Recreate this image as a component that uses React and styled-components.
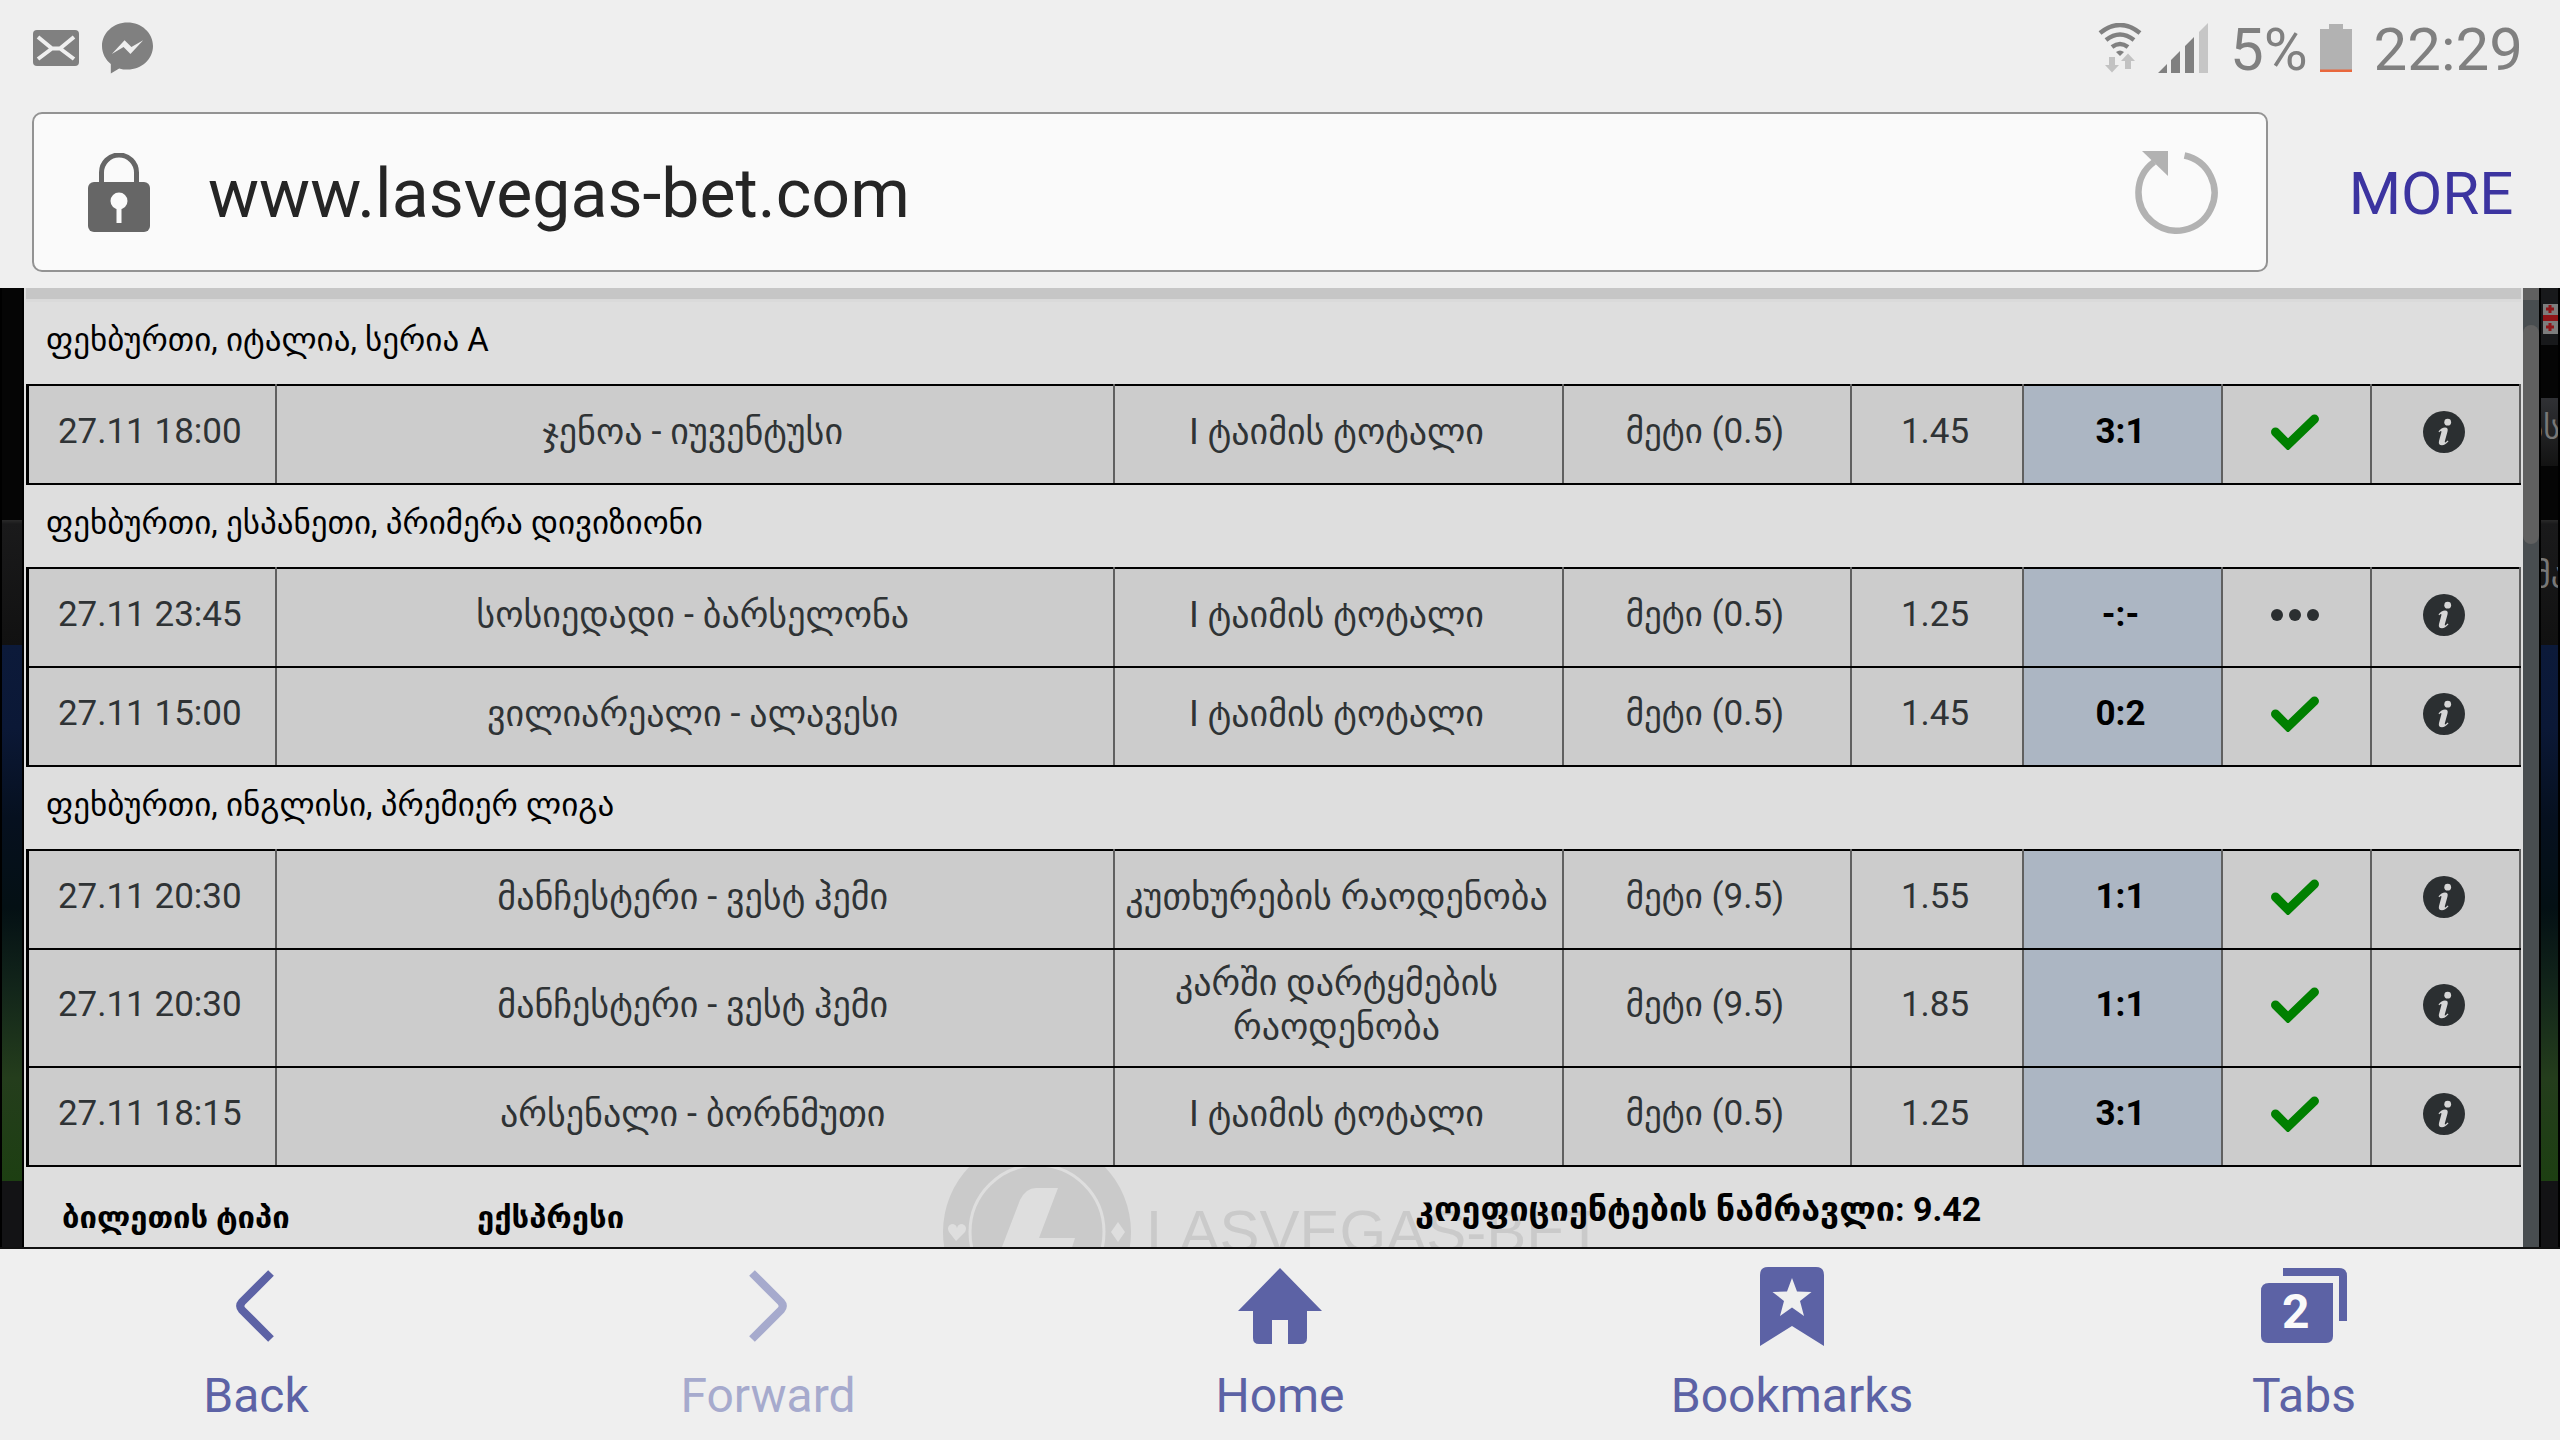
import React from "react";
import styled, { createGlobalStyle, css } from "styled-components";

const sections = [
  {
    title: "ფეხბურთი, იტალია, სერია A",
    rows: [
      { time: "27.11 18:00", teams: "ჯენოა - იუვენტუსი", market: "I ტაიმის ტოტალი", pick: "მეტი (0.5)", odds: "1.45", score: "3:1", won: true },
    ],
  },
  {
    title: "ფეხბურთი, ესპანეთი, პრიმერა დივიზიონი",
    rows: [
      { time: "27.11 23:45", teams: "სოსიედადი - ბარსელონა", market: "I ტაიმის ტოტალი", pick: "მეტი (0.5)", odds: "1.25", score: "-:-", won: false },
      { time: "27.11 15:00", teams: "ვილიარეალი - ალავესი", market: "I ტაიმის ტოტალი", pick: "მეტი (0.5)", odds: "1.45", score: "0:2", won: true },
    ],
  },
  {
    title: "ფეხბურთი, ინგლისი, პრემიერ ლიგა",
    rows: [
      { time: "27.11 20:30", teams: "მანჩესტერი - ვესტ ჰემი", market: "კუთხურების რაოდენობა", pick: "მეტი (9.5)", odds: "1.55", score: "1:1", won: true },
      { time: "27.11 20:30", teams: "მანჩესტერი - ვესტ ჰემი", market: "კარში დარტყმების რაოდენობა", pick: "მეტი (9.5)", odds: "1.85", score: "1:1", won: true },
      { time: "27.11 18:15", teams: "არსენალი - ბორნმუთი", market: "I ტაიმის ტოტალი", pick: "მეტი (0.5)", odds: "1.25", score: "3:1", won: true },
    ],
  },
];

const MailIcon = () => (
  <svg width="46" height="36" viewBox="0 0 46 36">
    <rect width="46" height="36" rx="4" fill="#808080" />
    <path d="M5 7l14 11.500h8L41 7M5 29l14-10.500M41 29L27 18.500" fill="none" stroke="#efefef" strokeWidth="4" />
  </svg>
);

const MessengerIcon = () => (
  <svg width="51" height="52" viewBox="0 0 52 52">
    <path d="M26 0C11.600 0 0 10.700 0 24c0 7.500 3.600 14 9 18.300V52l8.500-5.200c2.700.8 5.500 1.200 8.500 1.200 14.400 0 26-10.700 26-24S40.400 0 26 0z" fill="#808080" />
    <path d="M10 32l13-14 7 7 12-7-13 14-7-7z" fill="#efefef" />
  </svg>
);

const WifiIcon = () => (
  <svg width="44" height="50" viewBox="0 0 44 50">
    <g fill="none" stroke="#808080" strokeWidth="4.500">
      <path d="M2 10Q22-6 42 10" />
      <path d="M8 17Q22 6 36 17" />
      <path d="M14 24Q22 18 30 24" />
    </g>
    <path d="M18 29q4-3 8 0l-4 4z" fill="#808080" />
    <path d="M11 34h6v8h4l-7 7.500-7-7.500h4zM27 46h6v-8h4l-7-7.500-7 7.500h4z" fill="#c2c2c2" />
  </svg>
);

const SignalIcon = () => (
  <svg width="50" height="50" viewBox="0 0 50 50">
    <path d="M0 50l9-9v9zM13 37l9-9v22h-9zM27 23l9-9v36h-9z" fill="#808080" />
    <path d="M41 9l9-9v50h-9z" fill="#c6c6c6" />
  </svg>
);

const BatteryIcon = () => (
  <svg width="32" height="48" viewBox="0 0 32 48">
    <path d="M9 0h14v5h9v43H0V5h9z" fill="#b2b2b2" />
    <path d="M0 45.500h32V48H0z" fill="#e9673c" />
  </svg>
);

const LockIcon = () => (
  <svg width="62" height="79" viewBox="0 0 62 79">
    <path d="M13.500 32V19.500a17.500 17.500 0 0 1 35 0V32" fill="none" stroke="#666" strokeWidth="5" />
    <rect y="29" width="62" height="50" rx="6" fill="#666" />
    <circle cx="31" cy="48" r="8.500" fill="#fafafa" />
    <path d="M28.500 50h5v20h-5z" fill="#fafafa" />
  </svg>
);

const ReloadIcon = () => (
  <svg width="84" height="84" viewBox="0 0 84 84">
    <path d="M50.500 5.500A38 38 0 1 1 20 12" fill="none" stroke="#b2b2b2" strokeWidth="6.500" />
    <path d="M8 1h26v25z" fill="#b2b2b2" />
  </svg>
);

const CheckIcon = () => (
  <svg width="48" height="36" viewBox="0 0 48 36">
    <path d="M4.500 18L17 30.500 43.500 5" fill="none" stroke="#008000" strokeWidth="9" strokeLinecap="round" />
  </svg>
);

const DotsIcon = () => (
  <svg width="48" height="12" viewBox="0 0 48 12">
    <g fill="#2b2f31">
      <circle cx="6" cy="6" r="6" />
      <circle cx="24" cy="6" r="6" />
      <circle cx="42" cy="6" r="6" />
    </g>
  </svg>
);

const InfoIcon = () => (
  <svg width="42" height="42" viewBox="0 0 42 42">
    <circle cx="21" cy="21" r="21" fill="#2b2f31" />
    <circle cx="24.700" cy="11.200" r="3.400" fill="#d6d6d6" />
    <path d="M15.500 20.500q3-3.800 6.500-4 3.500 0 2.500 4l-2.600 9.500q-.5 2 .8 1.200l2-1.800.8.900q-3.400 4-6.500 4-4 0-3-4.300l2.300-8.500q.5-2-.6-1.500l-1.500 1.300z" fill="#d6d6d6" />
  </svg>
);

const BackIcon = () => (
  <svg width="42" height="72" viewBox="0 0 42 72">
    <path d="M36 3L7 32q-3.500 4 0 8l29 29" fill="none" stroke="currentColor" strokeWidth="8" />
  </svg>
);

const ForwardIcon = () => (
  <svg width="40" height="72" viewBox="0 0 40 72">
    <path d="M4 3l29 29q3.500 4 0 8L4 69" fill="none" stroke="currentColor" strokeWidth="8" />
  </svg>
);

const HomeIcon = () => (
  <svg width="84" height="76" viewBox="0 0 84 76">
    <path d="M42 0l42 43H69v27q0 6-6 6H50V52H34v24H21q-6 0-6-6V43H0z" fill="currentColor" />
  </svg>
);

const BookmarkIcon = () => (
  <svg width="64" height="79" viewBox="0 0 64 79">
    <path d="M0 8q0-8 8-8h48q8 0 8 8v71L32 59 0 79z" fill="currentColor" />
    <path d="M32 11l5 13.500 14.500.5L40 34l4 15-12-8.500L20 49l4-15-11.500-9L27 24.500z" fill="#efefef" />
  </svg>
);

const TabsIcon = () => (
  <svg width="86" height="76" viewBox="0 0 86 76">
    <path d="M22 0h56q8 0 8 8v45h-8V8H22z" fill="currentColor" />
    <path d="M8 15h64v53q0 7-7 7H7q-7 0-7-7V23q0-8 8-8z" fill="currentColor" />
  </svg>
);

const FlagIcon = () => (
  <svg width="16" height="30" viewBox="0 0 16 30">
    <path d="M0 0h16v30H0z" fill="#7d7d7d" />
    <path d="M0 11h16v6H0zM5.500 1h3v8h-3zM3 3.500h8v3H3zM5.500 19h3v8h-3zM3 21.500h8v3H3z" fill="#8e1518" />
  </svg>
);

const LogoMark = () => (
  <svg width="188" height="188" viewBox="0 0 188 188">
    <circle cx="94" cy="94" r="94" fill="#cacaca" />
    <circle cx="94" cy="94" r="67" fill="none" stroke="#dedede" strokeWidth="3" />
    <path d="M77 62q6-12 16-12h22L96 100h36l-7 22H54z" fill="#dedede" />
    <path d="M13 103l-7-9q-3-6 3-8 4 0 5 4 1-4 5-4 6 2 3 8zM175 84l7 10-7 10-7-10z" fill="#dedede" />
  </svg>
);

const App = () => (
  <Screen>
    <GlobalStyle />
    <StatusBar>
      <StatusIcons gap={23}>
        <MailIcon />
        <MessengerIcon />
      </StatusIcons>
      <StatusInfo>
        <StatusIcons gap={16}>
          <WifiIcon />
          <SignalIcon />
        </StatusIcons>
        <StatusText>5%</StatusText>
        <BatteryIcon />
        <StatusText>22:29</StatusText>
      </StatusInfo>
    </StatusBar>
    <AddressBar>
      <UrlBox>
        <LockIcon />
        <UrlInput aria-label="Address" defaultValue="www.lasvegas-bet.com" />
        <IconButton aria-label="Reload">
          <ReloadIcon />
        </IconButton>
      </UrlBox>
      <MoreButton>MORE</MoreButton>
    </AddressBar>
    <Viewport>
      <Backdrop width={24} />
      <Ticket>
        <HeadStrip />
        {sections.map((section) => (
          <section key={section.title}>
            <SectionTitle>{section.title}</SectionTitle>
            <BetTable>
              <colgroup>
                <Col width={248} />
                <col />
                <Col width={449} />
                <Col width={288} />
                <Col width={172} />
                <Col width={199} />
                <Col width={149} />
                <Col width={149} />
              </colgroup>
              <tbody>
                {section.rows.map((row, index) => (
                  <tr key={index}>
                    <Td>{row.time}</Td>
                    <Td large>{row.teams}</Td>
                    <Td large>{row.market}</Td>
                    <Td>{row.pick}</Td>
                    <Td>{row.odds}</Td>
                    <Td score>{row.score}</Td>
                    <Td>{row.won ? <CheckIcon /> : <DotsIcon />}</Td>
                    <Td>
                      <IconButton aria-label="Info">
                        <InfoIcon />
                      </IconButton>
                    </Td>
                  </tr>
                ))}
              </tbody>
            </BetTable>
          </section>
        ))}
        <Summary>
          <Watermark>
            <LogoMark />
            <span>LASVEGAS-BET</span>
          </Watermark>
          <SummaryLabel>ბილეთის ტიპი</SummaryLabel>
          <SummaryType>ექსპრესი</SummaryType>
          <SummaryOdds>კოეფიციენტების ნამრავლი: 9.42</SummaryOdds>
        </Summary>
      </Ticket>
      <ScrollTrack>
        <ScrollThumb />
      </ScrollTrack>
      <Backdrop width={21}>
        <SideHeader>
          <FlagIcon />
        </SideHeader>
        <SideLink>ას</SideLink>
        <SideTitle>მა</SideTitle>
      </Backdrop>
    </Viewport>
    <BottomNav>
      <NavButton>
        <NavIcon><BackIcon /></NavIcon>
        Back
      </NavButton>
      <NavButton disabled>
        <NavIcon><ForwardIcon /></NavIcon>
        Forward
      </NavButton>
      <NavButton>
        <NavIcon><HomeIcon /></NavIcon>
        Home
      </NavButton>
      <NavButton>
        <NavIcon><BookmarkIcon /></NavIcon>
        Bookmarks
      </NavButton>
      <NavButton>
        <NavIcon>
          <TabsIcon />
          <TabCount>2</TabCount>
        </NavIcon>
        Tabs
      </NavButton>
    </BottomNav>
  </Screen>
);

export default App;

const GlobalStyle = createGlobalStyle`
  * {
    box-sizing: border-box;
  }
  body {
    margin: 0;
    background: #efefef;
    font-family: Roboto, "DejaVu Sans", sans-serif;
  }
  button, input {
    font-family: inherit;
    border: 0;
    padding: 0;
    margin: 0;
    background: none;
  }
  svg {
    display: block;
    flex: none;
  }
`;

const Screen = styled.div`
  display: flex;
  flex-direction: column;
  height: 100vh;
  overflow: hidden;
`;

const StatusBar = styled.header`
  display: flex;
  justify-content: space-between;
  align-items: center;
  height: 96px;
  padding: 0 37px 0 33px;
`;

const StatusIcons = styled.div`
  display: flex;
  align-items: center;
  gap: ${(props) => props.gap}px;
`;

const StatusInfo = styled.div`
  display: flex;
  align-items: center;
  gap: 12px;
`;

const StatusText = styled.span`
  margin-left: 10px;
  padding-top: 4px;
  font-size: 60px;
  line-height: 72px;
  color: #808080;
`;

const AddressBar = styled.div`
  display: flex;
  align-items: center;
  height: 192px;
  padding: 16px 0 16px 32px;
`;

const UrlBox = styled.div`
  flex: 1;
  display: flex;
  align-items: center;
  height: 160px;
  padding: 0 48px 0 54px;
  background: #fafafa;
  border: 2px solid #939393;
  border-radius: 10px;
`;

const UrlInput = styled.input`
  flex: 1;
  margin-left: 58px;
  padding-top: 4px;
  font-size: 68px;
  line-height: 84px;
  color: #252525;
  outline: none;
`;

const IconButton = styled.button`
  display: flex;
  margin: 0 auto;
  cursor: pointer;
`;

const MoreButton = styled.button`
  width: 292px;
  padding: 4px 0 0 34px;
  font-size: 60px;
  line-height: 72px;
  color: #3c34a0;
`;

const Viewport = styled.main`
  flex: 1;
  min-height: 0;
  display: flex;
  background: #000;
  border-bottom: 2px solid #111;
  overflow: hidden;
`;

/* dimmed page behind the ticket: header, panel, stadium photo, footer */
const Backdrop = styled.div`
  position: relative;
  flex: none;
  width: ${(props) => props.width}px;
  overflow: hidden;
  border: 0 solid #000;
  border-width: 0 2px;
  background: linear-gradient(
    #050505 0,
    #050505 232px,
    #2a2a2a 232px,
    #1a1a1b 236px,
    #111 357px,
    #0c1a3a 357px,
    #0b1836 440px,
    #06101f 530px,
    #041014 620px,
    #12251a 700px,
    #243d1c 790px,
    #1d3f12 893px,
    #131315 893px
  );
`;

const Ticket = styled.div`
  flex: 1;
  min-width: 0;
  display: flex;
  flex-direction: column;
  padding: 0 2px;
  background: #dedede;
`;

const HeadStrip = styled.div`
  flex: none;
  height: 14px;
  background: #c6c6c6;
  border-bottom: 3px solid #dadada;
`;

const SectionTitle = styled.h2`
  margin: 0;
  padding: 0 20px 6px;
  font-size: 33px;
  font-weight: 400;
  line-height: 76px;
  color: #000;
`;

const BetTable = styled.table`
  width: 100%;
  table-layout: fixed;
  border-collapse: collapse;
  border-left: 3px solid #000;
  background: #ccc;
`;

const Col = styled.col`
  width: ${(props) => props.width}px;
`;

const Td = styled.td`
  height: 99px;
  padding: 11px 12px 17px 8px;
  border: 2px solid #606060;
  border-top: 2px solid #000;
  border-bottom: 2px solid #000;
  text-align: center;
  vertical-align: middle;
  font-size: ${(props) => (props.large ? 36 : 35)}px;
  line-height: 44px;
  color: #2f3335;
  &:first-child {
    border-left: 3px solid #000;
  }
  & > svg {
    margin: 0 auto;
  }
  ${(props) =>
    props.score &&
    css`
      background: #acb6c3;
      color: #000;
      font-weight: 700;
    `}
`;

const Summary = styled.div`
  position: relative;
  flex: 1;
  display: flex;
  padding: 20px 0 0 36px;
  overflow: hidden;
  font-weight: 700;
  color: #000;
  & > span {
    position: relative;
  }
`;

const Watermark = styled.div`
  position: absolute;
  top: -29px;
  left: calc(37% - 6px);
  display: flex;
  align-items: center;
  gap: 15px;
  font: 400 60px/60px "Liberation Sans", sans-serif;
  color: #cacaca;
`;

const SummaryLabel = styled.span`
  width: 415px;
  padding-top: 11px;
  font-size: 31px;
  line-height: 40px;
`;

const SummaryType = styled.span`
  width: 938px;
  padding-top: 11px;
  font-size: 31px;
  line-height: 40px;
`;

const SummaryOdds = styled.span`
  font-size: 34px;
  line-height: 44px;
`;

const ScrollTrack = styled.div`
  flex: none;
  width: 16px;
  padding-top: 37px;
  background: linear-gradient(#606060 12px, #484d50 12px);
`;

const ScrollThumb = styled.div`
  height: 219px;
  border-radius: 8px;
  background: #606060;
`;

const SideHeader = styled.div`
  height: 57px;
  padding: 16px 0 0 2px;
  background: #18191b;
`;

const SideLink = styled.div`
  position: absolute;
  top: 110px;
  left: 0;
  right: -2px;
  display: flex;
  justify-content: flex-end;
  height: 68px;
  font-size: 32px;
  line-height: 60px;
  color: #777;
  background: linear-gradient(#303135, #131313);
`;

const SideTitle = styled.div`
  position: absolute;
  top: 255px;
  left: -8px;
  font-size: 34px;
  line-height: 64px;
  color: #777;
`;

const BottomNav = styled.nav`
  flex: none;
  display: grid;
  grid-template-columns: repeat(5, 1fr);
  height: 191px;
  background: #efefef;
`;

const NavButton = styled.button`
  display: flex;
  flex-direction: column;
  align-items: center;
  gap: 20px;
  padding-top: 17px;
  font-size: 48px;
  line-height: 60px;
  color: #5c62a5;
  cursor: pointer;
  &:disabled {
    color: #a6aacd;
  }
`;

const NavIcon = styled.span`
  position: relative;
  display: flex;
  align-items: center;
  height: 80px;
`;

const TabCount = styled.span`
  position: absolute;
  left: 21px;
  top: 18px;
  font-size: 48px;
  font-weight: 700;
  line-height: 56px;
  color: #fafafa;
`;
